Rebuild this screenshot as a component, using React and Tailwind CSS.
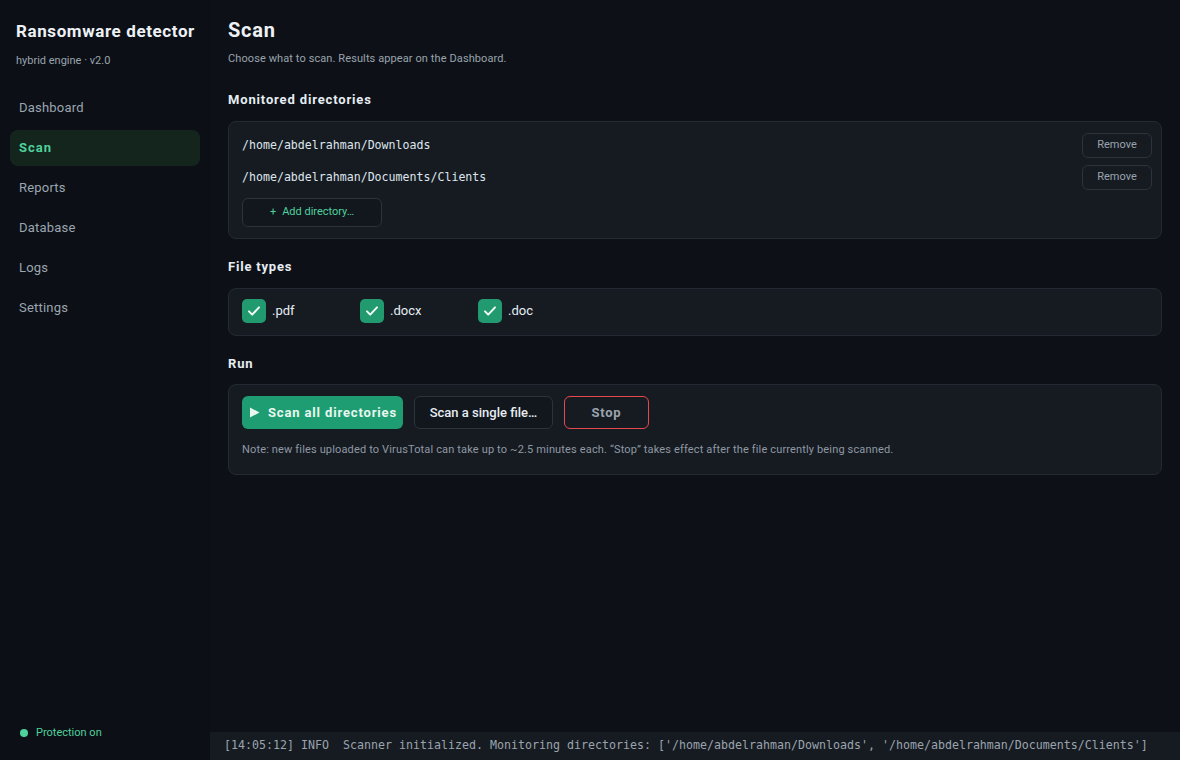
import React from "react";

const sans = { fontFamily: "Roboto, 'Noto Sans', sans-serif" };
const mono = { fontFamily: "'DejaVu Sans Mono', 'Liberation Mono', monospace" };

function Check() {
  return (
    <span className="flex h-6 w-6 items-center justify-center rounded-[5px] bg-[#219a70]">
      <svg width="16" height="16" viewBox="0 0 16 16" fill="none">
        <path d="M3 8.4l3.2 3.2L13 4.4" stroke="#f2fbf6" strokeWidth="2" strokeLinecap="round" strokeLinejoin="round" />
      </svg>
    </span>
  );
}

export default function App() {
  const nav = ["Dashboard", "Scan", "Reports", "Database", "Logs", "Settings"];
  return (
    <div className="flex h-[760px] w-[1180px] overflow-hidden bg-[#0d1117] text-[#e6edf3]" style={sans}>
      <aside className="flex w-[210px] shrink-0 flex-col justify-between bg-[#0c1016] px-[10px] pb-[19px]">
        <div>
          <div className="pl-[6px] pt-[19px] text-[17px] font-bold leading-[24px] tracking-[0.6px] text-[#eef2f6]">Ransomware detector</div>
          <div className="pl-[6px] pt-[11px] text-[11px] leading-[14px] text-[#9aa3ad]">hybrid engine · v2.0</div>
          <nav className="mt-[22px] flex flex-col gap-[4px]">
            {nav.map((n) => (
              <div
                key={n}
                className={
                  "flex h-[36px] items-center rounded-[8px] pl-[9px] text-[13px] " +
                  (n === "Scan" ? "bg-[#13251d] font-bold text-[#4fd19c] tracking-[1px]" : "text-[#9ba5b0] tracking-[0.2px]")
                }
              >
                {n}
              </div>
            ))}
          </nav>
        </div>
        <div className="flex items-center gap-[8px] pl-[10px]">
          <span className="h-[8px] w-[8px] rounded-full bg-[#4fd19c]" />
          <span className="text-[11px] text-[#4fd19c]">Protection on</span>
        </div>
      </aside>

      <main className="flex min-w-0 flex-1 flex-col">
        <div className="flex-1 px-[18px]">
          <h1 className="pt-[17px] text-[20px] font-bold leading-[26px] tracking-[0.75px] text-[#eef2f6]">Scan</h1>
          <p className="pt-[9px] text-[11px] leading-[14px] tracking-[0.1px] text-[#9aa3ad]">Choose what to scan. Results appear on the Dashboard.</p>

          <h2 className="pt-[25px] text-[13px] font-bold leading-[18px] tracking-[0.85px] text-[#e6edf3]">Monitored directories</h2>
          <div className="mt-[12px] rounded-[8px] border border-[#232a33] bg-[#161b22] pb-[11px] pl-[13px] pr-[9px] pt-[11px]">
            <div className="flex flex-col gap-[7px]">
              {["/home/abdelrahman/Downloads", "/home/abdelrahman/Documents/Clients"].map((p) => (
                <div key={p} className="flex h-[25px] items-center justify-between">
                  <span className="text-[11.6px] text-[#dfe5ec]" style={mono}>{p}</span>
                  <button className="h-[25px] w-[70px] rounded-[6px] border border-[#2c333d] text-[11px] text-[#9aa3ad]">Remove</button>
                </div>
              ))}
            </div>
            <button className="mt-[8px] flex h-[29px] w-[140px] items-center justify-center gap-[6px] rounded-[6px] border border-[#2c333d] bg-[#12171e] text-[11px] text-[#4fd19c]">
              <span>+</span>
              <span>Add directory…</span>
            </button>
          </div>

          <h2 className="pt-[19px] text-[13px] font-bold leading-[18px] tracking-[0.8px] text-[#e6edf3]">File types</h2>
          <div className="mt-[12px] flex items-center rounded-[8px] border border-[#232a33] bg-[#161b22] pb-[12px] pl-[13px] pt-[10px]">
            {[".pdf", ".docx", ".doc"].map((t) => (
              <label key={t} className="flex w-[118px] items-center gap-[6px] text-[13px] text-[#e6edf3]">
                <Check />
                <span>{t}</span>
              </label>
            ))}
          </div>

          <h2 className="pt-[19px] text-[13px] font-bold leading-[18px] tracking-[0.8px] text-[#e6edf3]">Run</h2>
          <div className="mt-[11px] rounded-[8px] border border-[#232a33] bg-[#161b22] pb-[17px] pl-[13px] pt-[11px]">
            <div className="flex items-center gap-[11px]">
              <button className="flex h-[33px] w-[161px] items-center gap-[8px] rounded-[6px] bg-[#1e9d72] pl-[7px] text-[13px] font-bold tracking-[0.85px] text-[#e9f7f0]">
                <svg width="11" height="11" viewBox="0 0 11 11"><path d="M1 0.5L10.5 5.5L1 10.5Z" fill="#e9f7f0" /></svg>
                Scan all directories
              </button>
              <button className="h-[33px] w-[139px] rounded-[6px] border border-[#2c333d] bg-[#12171e] text-[13px] font-medium text-[#e6edf3]">Scan a single file…</button>
              <button className="h-[33px] w-[85px] rounded-[6px] border border-[#e5484d] text-[13px] font-bold tracking-[0.75px] text-[#9aa3ad]">Stop</button>
            </div>
            <p className="pt-[14px] text-[11px] leading-[14px] tracking-[0.15px] text-[#8f98a3]">
              Note: new files uploaded to VirusTotal can take up to ~2.5 minutes each. “Stop” takes effect after the file currently being scanned.
            </p>
          </div>
        </div>
        <div className="flex h-[28px] shrink-0 items-center bg-[#161b22] pl-[14px] text-[11.63px] text-[#9aa3ad] whitespace-pre" style={mono}>
          {"[14:05:12] INFO  Scanner initialized. Monitoring directories: ['/home/abdelrahman/Downloads', '/home/abdelrahman/Documents/Clients']"}
        </div>
      </main>
    </div>
  );
}
